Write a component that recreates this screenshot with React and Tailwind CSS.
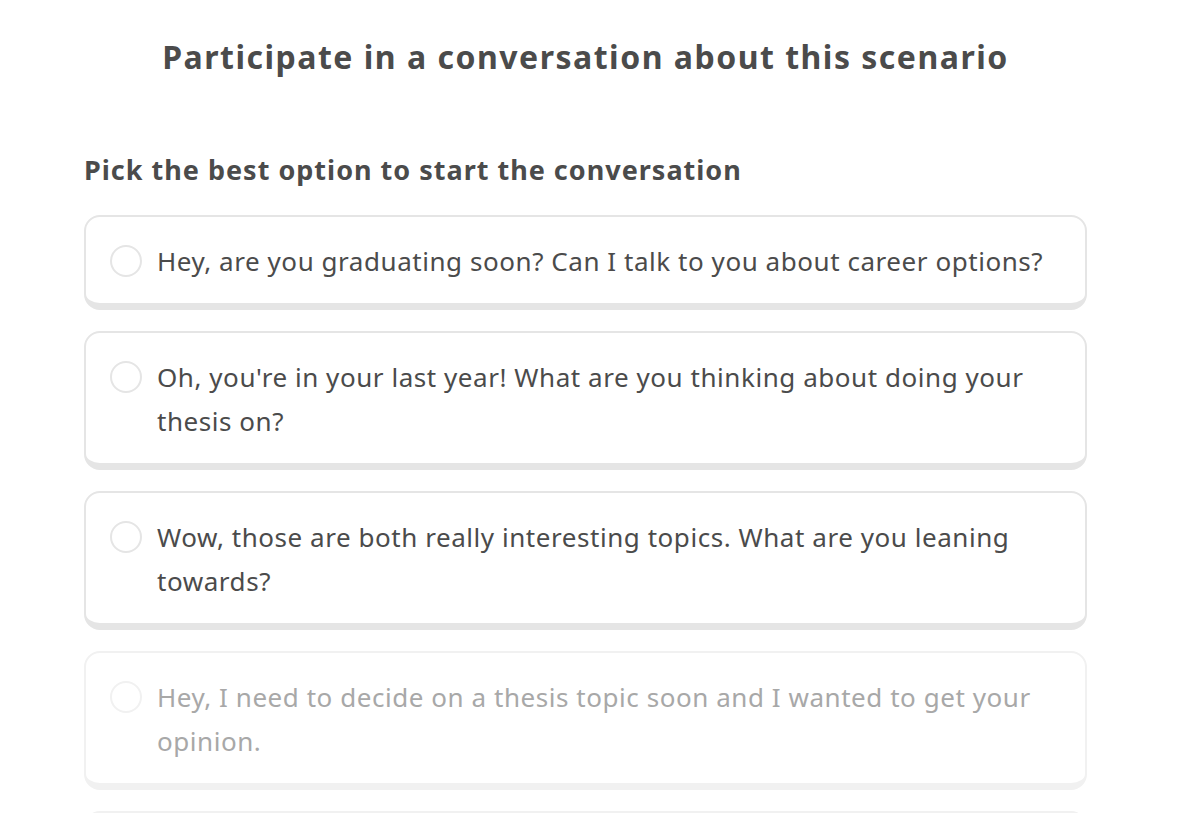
import { useState } from 'react';

const options = [
  "Hey, are you graduating soon? Can I talk to you about career options?",
  "Oh, you're in your last year! What are you thinking about doing your thesis on?",
  'Wow, those are both really interesting topics. What are you leaning towards?',
  'Hey, I need to decide on a thesis topic soon and I wanted to get your opinion.',
  "So what's your plan after you finish your degree this year?",
];

function Option({ text, disabled, selected, onSelect }) {
  return (
    <button
      onClick={onSelect}
      disabled={disabled}
      className={`flex w-full items-start gap-[15px] rounded-[16px] border-2 border-b-[7px] bg-white pl-[24px] pr-[24px] pt-[22px] pb-[20px] text-left ${
        disabled ? 'border-[#f1f1f1]' : 'border-[#e5e5e5]'
      }`}
    >
      <span
        className={`mt-[6px] h-[32px] w-[32px] shrink-0 rounded-full border-2 ${
          disabled ? 'border-[#f1f1f1]' : selected ? 'border-[#1cb0f6]' : 'border-[#e5e5e5]'
        }`}
      />
      <span
        className={`text-[26px] leading-[44px] tracking-[0.55px] ${disabled ? 'text-[#a8a8a8]' : 'text-[#4b4b4b]'}`}
      >
        {text}
      </span>
    </button>
  );
}

export default function App() {
  const [picked, setPicked] = useState(null);

  return (
    <div className="min-h-screen bg-white font-['Noto_Sans',sans-serif]">
      <div className="ml-[84px] w-[1003px] pt-[36px]">
        <h1 className="text-center text-[32px] font-bold leading-[42px] tracking-[1.5px] text-[#4b4b4b]">
          Participate in a conversation about this scenario
        </h1>
        <h2 className="mt-[74px] text-[27px] font-bold leading-[36px] tracking-[1px] text-[#4b4b4b]">
          Pick the best option to start the conversation
        </h2>
        <div className="mt-[27px] flex flex-col gap-[21px]">
          {options.map((text, i) => (
            <Option
              key={i}
              text={text}
              disabled={i >= 3}
              selected={picked === i}
              onSelect={() => setPicked(i)}
            />
          ))}
        </div>
      </div>
    </div>
  );
}
